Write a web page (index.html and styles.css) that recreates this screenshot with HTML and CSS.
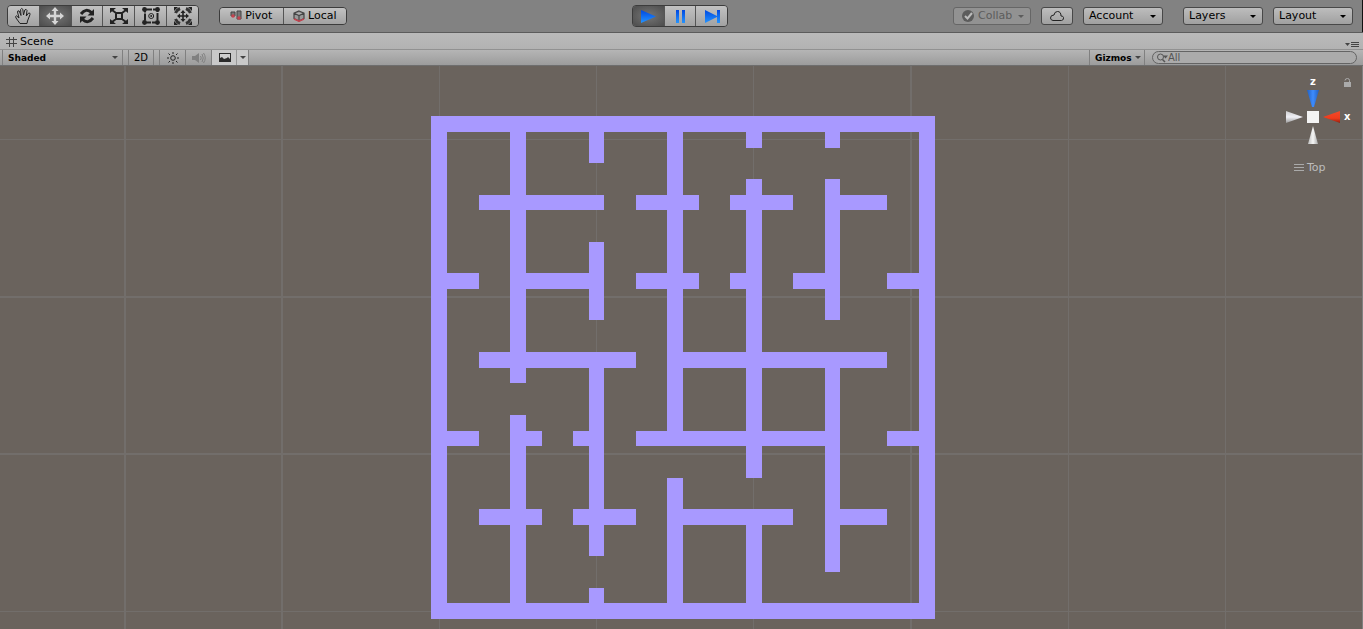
FILE: index.html
```html
<!DOCTYPE html>
<html lang="en">
<head>
<meta charset="utf-8">
<title>Scene</title>
<link rel="stylesheet" href="styles.css">
</head>
<body>
<div class="editor">
  <header class="toolbar">
    <div class="side">
      <div class="group tools">
        <button type="button" aria-label="Hand"><svg width="20" height="20" viewBox="0 0 20 20"><path class="line" d="M7 17.500 L3 12 Q2 10 3.500 9.800 L6 12 L4.500 6 Q4.500 4.200 6.200 5 L8 9.500 L7.600 3.500 Q8.500 1.500 9.800 3.300 L10.500 9 L11.800 4 Q13.200 2.500 14 4.400 L13.300 10 L15.600 7 Q17.300 6.500 17 8.500 L14.500 15 L14 17.500 Z"/></svg></button>
        <button type="button" class="on" aria-label="Move"><svg width="20" height="20" viewBox="0 0 20 20"><path class="light" d="M10 1 L13.500 5 H11.200 V8.800 H15 V6.500 L19 10 L15 13.500 V11.200 H11.200 V15 H13.500 L10 19 L6.500 15 H8.800 V11.200 H5 V13.500 L1 10 L5 6.500 V8.800 H8.800 V5 H6.500 Z"/></svg></button>
        <button type="button" aria-label="Rotate"><svg width="20" height="20" viewBox="0 0 20 20"><path class="thick" d="M4 8 Q9 1.500 14.500 6.500 M16 12 Q11 18.500 5.500 13.500"/><path class="ink" d="M17 3 V9.500 H10.500 Z M3 17 V10.500 H9.500 Z"/></svg></button>
        <button type="button" aria-label="Scale"><svg width="20" height="20" viewBox="0 0 20 20"><path class="stroke2" d="M7 7 H13 V13 H7 Z M7 7 L3 4 M13 7 L17 4 M7 13 L3 16 M13 13 L17 16"/><path class="ink" d="M1 2 H7 L1 7 Z M19 2 H13 L19 7 Z M1 18 H7 L1 13 Z M19 18 H13 L19 13 Z"/></svg></button>
        <button type="button" aria-label="Rect"><svg width="20" height="20" viewBox="0 0 20 20"><path class="stroke2" d="M4 3.500 H16.500 V16.500 H4 Z" stroke-dasharray="7 1"/><g class="ink"><circle cx="3.500" cy="3.500" r="2.400"/><circle cx="16.500" cy="3.500" r="2.400"/><circle cx="3.500" cy="16.500" r="2.400"/><circle cx="16.500" cy="16.500" r="2.400"/><circle cx="10.200" cy="10" r="1"/></g><circle class="line" cx="10.200" cy="10" r="2.500"/></svg></button>
        <button type="button" aria-label="Transform"><svg width="20" height="20" viewBox="0 0 20 20"><path class="ring" d="M2.500 7 A8 8 0 0 1 7 2.500 M13 2.500 A8 8 0 0 1 17.500 7 M17.500 13 A8 8 0 0 1 13 17.500 M7 17.500 A8 8 0 0 1 2.500 13"/><path class="ink" d="M1 1 H5 L1 5 Z M19 1 H15 L19 5 Z M1 19 H5 L1 15 Z M19 19 H15 L19 15 Z M10 4 L12.500 7 H10.800 V9.200 H13 V7.500 L16 10 L13 12.500 V10.800 H10.800 V13 H12.500 L10 16 L7.500 13 H9.200 V10.800 H7 V12.500 L4 10 L7 7.500 V9.200 H9.200 V7 H7.500 Z"/></svg></button>
      </div>
      <div class="group pair">
        <button type="button"><svg width="12" height="12" viewBox="0 0 12 12"><path d="M1 2 H5 V6 H1 Z M7 1 H11 V9 H7 Z" fill="#777" stroke="#444"/><circle cx="3" cy="6" r="1.800" fill="#c4434f"/><circle cx="9" cy="8" r="1.800" fill="#c4434f"/></svg>Pivot</button>
        <button type="button"><svg width="12" height="12" viewBox="0 0 12 12"><path d="M6 1 L11 3.200 V8.500 L6 11 L1 8.500 V3.200 Z M1 3.200 L6 5.500 L11 3.200 M6 5.500 V11" fill="#999" stroke="#444" stroke-width="1.200"/><path d="M1 9 L6 11.200 L11 9" fill="none" stroke="#c4434f" stroke-width="1.500"/></svg>Local</button>
      </div>
    </div>
    <div class="group tools play">
      <button type="button" class="on" aria-label="Play"><svg width="20" height="20" viewBox="0 0 20 20"><use href="#tri"/></svg></button>
      <button type="button" aria-label="Pause"><svg width="20" height="20" viewBox="0 0 20 20"><path fill="url(#blue)" d="M6 4 H9 V17 H6 Z M12 4 H15 V17 H12 Z"/></svg></button>
      <button type="button" aria-label="Step"><svg width="20" height="20" viewBox="0 0 20 20"><path fill="url(#blue)" d="M3 4 L15 10 V4 H18 V17 H15 V11 L3 17 Z"/></svg></button>
    </div>
    <div class="side end">
      <button type="button" class="menu collab" disabled><svg width="14" height="14" viewBox="0 0 14 14"><circle cx="7" cy="7" r="6" fill="#5c5c5c"/><path d="M4 7 L6.500 9.500 L11 4" fill="none" stroke="#bbb" stroke-width="2"/></svg>Collab<i class="arrow"></i></button>
      <button type="button" class="menu cloud" aria-label="Services"><svg width="16" height="12" viewBox="0 0 16 12"><path class="line" d="M4 10.500 H12.500 Q15 10 14.500 7.500 Q14 5.800 12 6 Q12 1.500 8.500 1.500 Q5.500 1.500 5 5 Q1.500 5 1.500 8 Q1.700 10.300 4 10.500 Z"/></svg></button>
      <button type="button" class="menu">Account<i class="arrow"></i></button>
      <button type="button" class="menu layers">Layers<i class="arrow"></i></button>
      <button type="button" class="menu layout">Layout<i class="arrow"></i></button>
    </div>
  </header>
  <div class="tabs">
    <h1 class="tab"><svg width="12" height="12" viewBox="0 0 12 12"><path class="hash" d="M3.500 1 V11 M7.500 1 V11 M0 3.500 H11 M0 7.500 H11"/></svg>Scene</h1>
    <button type="button" class="options" aria-label="Tab options"><svg width="14" height="7" viewBox="0 0 14 7"><path d="M0 2 H5 L2.500 5 Z" fill="#444"/><path d="M6 1.500 H14 M6 3.500 H14 M6 5.500 H14" stroke="#444"/></svg></button>
  </div>
  <div class="bar">
    <button type="button" class="cell shaded">Shaded<i class="arrow"></i></button>
    <button type="button" class="cell two">2D</button>
    <button type="button" class="cell light-toggle" aria-label="Lighting"><svg width="12" height="12" viewBox="0 0 12 12"><circle class="line" cx="6" cy="6" r="2.300"/><path class="line" d="M6 0 V2 M6 10 V12 M0 6 H2 M10 6 H12 M1.500 1.500 L3 3 M9 9 L10.500 10.500 M1.500 10.500 L3 9 M9 3 L10.500 1.500"/></svg></button>
    <button type="button" class="cell sound" aria-label="Audio"><svg width="14" height="12" viewBox="0 0 14 12"><path d="M0 4 H3 L7 1 V11 L3 8 H0 Z" fill="#808080"/><path d="M8.500 4 Q10 6 8.500 8 M10 2 Q12.500 6 10 10 M11.500 1 Q15 6 11.500 11" fill="none" stroke="#808080"/></svg></button>
    <button type="button" class="cell effects" aria-label="Effects"><svg width="12" height="9" viewBox="0 0 12 9"><path d="M0 0 H12 V9 H0 Z" fill="#2b2b2b"/><path d="M1 5 L3 4 L5 6 L8 5 L9 4 L11 6 V1 H1 Z" fill="#ccc"/></svg><span class="split"><i class="arrow"></i></span></button>
    <button type="button" class="cell gizmos">Gizmos<i class="arrow"></i></button>
    <label class="search"><svg width="12" height="12" viewBox="0 0 12 12"><circle cx="4.500" cy="5" r="3" fill="none" stroke="#555"/><path d="M6.500 7.500 L9 10" stroke="#555" stroke-width="1.500"/><path d="M7 3.500 H12 L9.500 6.500 Z" fill="#555"/></svg><input type="text" placeholder="All" aria-label="Search"></label>
  </div>
  <main class="scene">
    <svg class="canvas" viewBox="0 66 1363 563" preserveAspectRatio="xMidYMid slice" shape-rendering="crispEdges">
      <defs>
        <linearGradient id="blue" x1="0" y1="0" x2="0" y2="1"><stop offset="0" stop-color="#0048e0"/><stop offset="1" stop-color="#2494ff"/></linearGradient>
        <path id="tri" fill="url(#blue)" d="M3 4 L18 10.500 L3 17 Z"/>
      </defs>
      <path class="grid" d="M124 66h2v563h-2z M281 66h2v563h-2z M439 66h1v563h-1z M596 66h1v563h-1z M753 66h1v563h-1z M910 66h2v563h-2z M1068 66h1v563h-1z M1225 66h1v563h-1z M0 139h1363v1H0z M0 296h1363v2H0z M0 453h1363v2H0z M0 611h1363v1H0z"/>
      <path class="wall" fill-rule="evenodd" d="M431 116H935V619H431Z M447 132V603H919V132Z"/>
      <path class="wall" d="M510 132h16v251h-16z M510 415h16v188h-16z M589 132h15v31h-15z M589 242h15v78h-15z M589 360h15v196h-15z M589 588h15v15h-15z M667 132h16v314h-16z M667 478h16v125h-16z M746 132h16v16h-16z M746 179h16v299h-16z M746 517h16v86h-16z M825 132h15v16h-15z M825 179h15v141h-15z M825 360h15v212h-15z"/>
      <path class="wall" d="M479 195H604v15H479z M636 195H699v15H636z M730 195H793v15H730z M825 195H887v15H825z M447 273H479v16H447z M510 273H604v16H510z M636 273H699v16H636z M730 273H746v16H730z M793 273H825v16H793z M887 273H919v16H887z M479 352H636v16H479z M667 352H887v16H667z M447 431H479v15H447z M510 431H542v15H510z M573 431H604v15H573z M636 431H840v15H636z M887 431H919v15H887z M479 509H542v16H479z M573 509H636v16H573z M667 509H793v16H667z M825 509H887v16H825z"/>
    </svg>
    <div class="gizmo">
      <svg width="80" height="76" viewBox="1280 74 80 76">
        <defs>
          <linearGradient id="zc"><stop offset="0" stop-color="#2260c0"/><stop offset=".5" stop-color="#3d8cff"/><stop offset="1" stop-color="#2260c0"/></linearGradient>
          <linearGradient id="xc" x1="0" y1="0" x2="0" y2="1"><stop offset="0" stop-color="#f04a2a"/><stop offset=".6" stop-color="#f03c1c"/><stop offset="1" stop-color="#8c2010"/></linearGradient>
          <linearGradient id="wc"><stop offset="0" stop-color="#bbb"/><stop offset=".5" stop-color="#f6f6f6"/><stop offset="1" stop-color="#aaa"/></linearGradient>
          <linearGradient id="hc" x1="0" y1="0" x2="0" y2="1"><stop offset="0" stop-color="#ccc"/><stop offset=".5" stop-color="#f0f0f6"/><stop offset="1" stop-color="#999"/></linearGradient>
        </defs>
        <path fill="url(#zc)" d="M1307 90H1319L1314 107H1312Z"/>
        <path fill="url(#xc)" d="M1323 117L1340 111V123Z"/>
        <path fill="url(#hc)" d="M1303 117L1286 111V123Z"/>
        <path fill="url(#wc)" d="M1313 126L1318 144H1308Z"/>
        <path fill="#f4f4f4" d="M1307 111h12v12h-12z"/>
        <path fill="#aaa" d="M1344 82h7v5h-7z"/><path fill="none" stroke="#aaa" d="M1345 80.500Q1345 78.500 1347.500 78.500Q1349.500 78.500 1349.500 80.500V83"/>
        <text x="1310" y="85">z</text><text x="1344" y="120">x</text>
      </svg>
      <button type="button" class="view"><svg width="10" height="8" viewBox="0 0 10 8"><path d="M0 .5H10M0 3.500H10M0 6.500H10" stroke="#aaa"/></svg>Top</button>
    </div>
  </main>
</div>
</body>
</html>
```
FILE: styles.css
```css
* { box-sizing: border-box; }
body { margin: 0; background: #828282; font: 11px/14px "DejaVu Sans", Verdana, sans-serif; color: #000; }
button, input { font: inherit; color: inherit; margin: 0; padding: 0; border: 0; background: none; }
svg { display: block; flex: none; }
.editor { display: flex; flex-direction: column; height: 100vh; }
.line { fill: none; stroke: #222; stroke-width: 1; }
.hash { fill: none; stroke: #444; stroke-width: 1; }
.ink { fill: #222; }
.light { fill: #d6d6d6; }
.thick { fill: none; stroke: #222; stroke-width: 3; }
.stroke2 { fill: none; stroke: #222; stroke-width: 2; }
.ring { fill: none; stroke: #333; stroke-width: 3; }

.toolbar { display: flex; align-items: center; height: 32px; padding: 0 9px 0 7px; border-right: 1px solid #111; background: #828282; }
.side { display: flex; align-items: center; flex: 1; }
.end { justify-content: flex-end; gap: 10px; }
.group { display: flex; border: 1px solid #3c3c3c; border-radius: 4px; overflow: hidden; }
.group button { display: flex; flex: 1; align-items: center; justify-content: center; background: linear-gradient(#c2c2c2, #a2a2a2); }
.group button + button { border-left: 1px solid #555; }
.tools { width: 192px; }
.play { width: 96px; }
.tools button { height: 20px; }
.group .on { background: radial-gradient(#767676, #4c4c4c); }
.pair { width: 128px; margin-left: 20px; }
.pair button { height: 16px; gap: 3px; }
.menu { display: flex; align-items: center; width: 80px; height: 18px; padding: 0 6px 0 5px; border: 1px solid #484848; border-radius: 3px; background: linear-gradient(#bdbdbd, #a0a0a0); }
.arrow { width: 0; height: 0; margin-left: auto; border: 3px solid transparent; border-top-color: currentColor; border-bottom: 0; }
.collab { width: 78px; padding-left: 7px; gap: 3px; color: #5c5c5c; border-color: #666; background: #929292; }
.cloud { width: 32px; padding: 0; justify-content: center; }
.layers { margin-left: 10px; }

.tabs { display: flex; align-items: center; justify-content: space-between; height: 17px; padding: 0 4px 0 6px; border-top: 1px solid #5c5c5c; background: linear-gradient(#bababa, #b2b2b2); }
.tab { display: flex; align-items: center; gap: 2px; margin: 0; padding-top: 1px; font: inherit; }
.options { align-self: flex-end; padding-bottom: 1px; }

.bar { display: flex; height: 17px; padding: 0 6px 0 2px; border-top: 1px solid #919191; border-bottom: 1px solid #6e6e6e; background: linear-gradient(#b5b5b5, #9c9c9c); font-size: 10px; }
.cell { display: flex; align-items: center; justify-content: center; border-right: 1px solid #808080; }
.shaded { width: 121px; padding: 0 4px 0 5px; border-left: 1px solid #808080; }
.shaded, .gizmos { font-size: 9px; font-weight: bold; }
.bar .arrow { border-width: 3px; border-bottom: 0; color: #444; }
.two { width: 26px; margin-left: 5px; border-left: 1px solid #808080; }
.light-toggle { width: 27px; margin-left: 5px; border-left: 1px solid #808080; }
.sound { width: 26px; }
.effects { width: 37px; padding-left: 7px; background: #c9c9c9; }
.split { display: flex; align-items: center; align-self: stretch; width: 12px; margin-left: auto; border-left: 1px solid #999; }
.split .arrow { margin: auto; }
.gizmos { width: 56px; margin-left: auto; padding: 0 3px 0 5px; border-left: 1px solid #808080; }
.search { display: flex; align-items: center; width: 205px; margin: 1px 0 1px 7px; padding-left: 3px; border: 1px solid #646464; border-radius: 8px; background: #ababab; }
.search input { flex: 1; min-width: 0; height: 12px; outline: 0; }
.search input::placeholder { color: #555; opacity: 1; }

.scene { position: relative; flex: 1; min-height: 0; border-right: 1px solid #808080; background: #6a635d; }
.canvas { width: 100%; height: 100%; }
.grid { fill: #726e6b; }
.wall { fill: #a899ff; }
.gizmo { position: absolute; top: 8px; right: 2px; display: flex; flex-direction: column; gap: 11px; }
.gizmo text { fill: #fff; font-size: 10px; font-weight: bold; }
.view { display: flex; align-items: center; gap: 3px; padding-left: 14px; color: #bdbdbd; }
```
